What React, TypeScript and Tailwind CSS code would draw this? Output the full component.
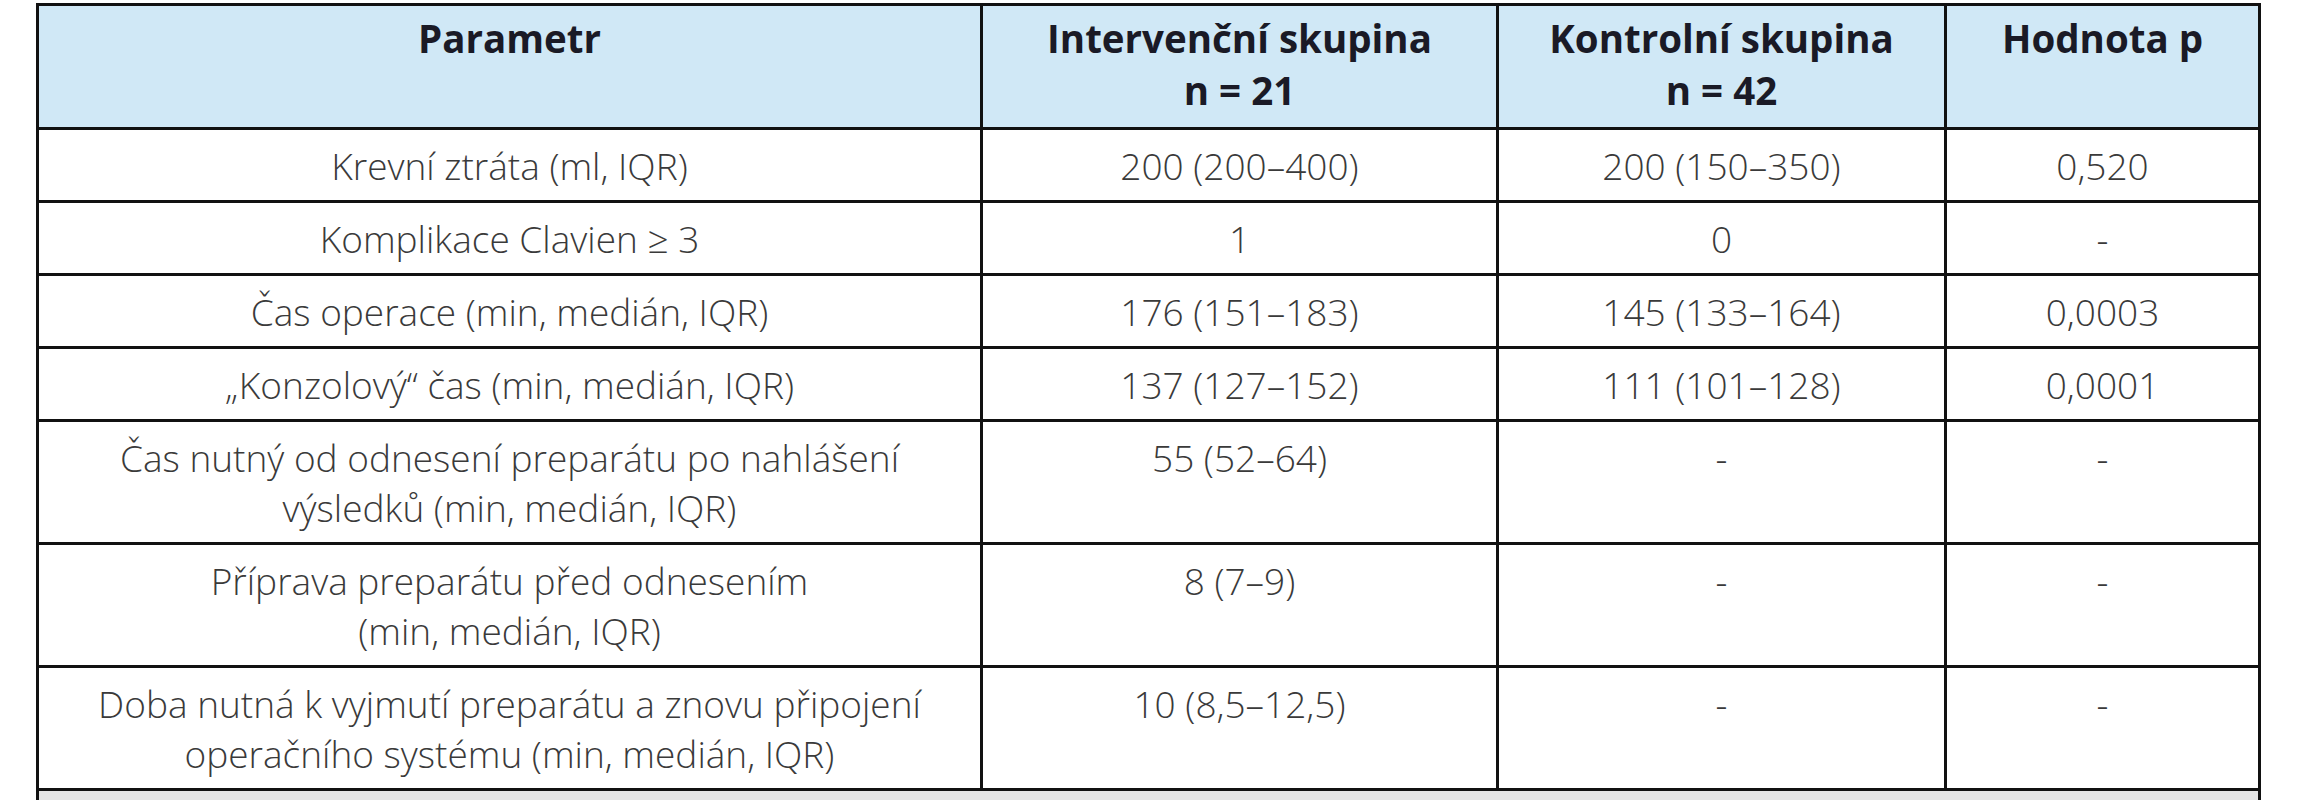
const rows: { label: React.ReactNode; a: string; b: string; p: string }[] = [
  { label: 'Krevní ztráta (ml, IQR)', a: '200 (200–400)', b: '200 (150–350)', p: '0,520' },
  { label: 'Komplikace Clavien ≥ 3', a: '1', b: '0', p: '-' },
  { label: 'Čas operace (min, medián, IQR)', a: '176 (151–183)', b: '145 (133–164)', p: '0,0003' },
  { label: '\u201EKonzolový\u201C čas (min, medián, IQR)', a: '137 (127–152)', b: '111 (101–128)', p: '0,0001' },
  {
    label: (
      <>
        Čas nutný od odnesení preparátu po nahlášení
        <br />
        výsledků (min, medián, IQR)
      </>
    ),
    a: '55 (52–64)',
    b: '-',
    p: '-',
  },
  {
    label: (
      <>
        Příprava preparátu před odnesením
        <br />
        (min, medián, IQR)
      </>
    ),
    a: '8 (7–9)',
    b: '-',
    p: '-',
  },
  {
    label: (
      <>
        Doba nutná k vyjmutí preparátu a znovu připojení
        <br />
        operačního systému (min, medián, IQR)
      </>
    ),
    a: '10 (8,5–12,5)',
    b: '-',
    p: '-',
  },
];

const th = 'border-[3px] border-[#111] align-top pt-[6px] pb-[11px] px-4 text-center font-bold';
const td = 'border-[3px] border-[#111] align-top pt-[11px] pb-[9px] px-4 text-center whitespace-nowrap';

export default function App() {
  return (
    <div className="min-h-screen bg-white pl-[36px] pt-[3px] font-['Open_Sans','Liberation_Sans',sans-serif]">
      <table className="table-fixed border-collapse w-[2222px]">
        <colgroup>
          <col className="w-[944px]" />
          <col className="w-[516px]" />
          <col className="w-[448px]" />
          <col className="w-[314px]" />
        </colgroup>
        <thead>
          <tr className="bg-[#d0e8f6] text-[38.5px] leading-[52px] text-[#1a1a26]">
            <th className={th}>Parametr</th>
            <th className={th}>
              Intervenční skupina
              <br />n = 21
            </th>
            <th className={th}>
              Kontrolní skupina
              <br />n = 42
            </th>
            <th className={th}>Hodnota p</th>
          </tr>
        </thead>
        <tbody className="text-[37px] leading-[50px] font-light text-[#3a3a3a]">
          {rows.map((r, i) => (
            <tr key={i}>
              <td className={td}>{r.label}</td>
              <td className={td}>{r.a}</td>
              <td className={td}>{r.b}</td>
              <td className={td}>{r.p}</td>
            </tr>
          ))}
          <tr>
            <td colSpan={4} className="border-[3px] border-[#111] bg-[#e5e5e5] h-[60px]" />
          </tr>
        </tbody>
      </table>
    </div>
  );
}
